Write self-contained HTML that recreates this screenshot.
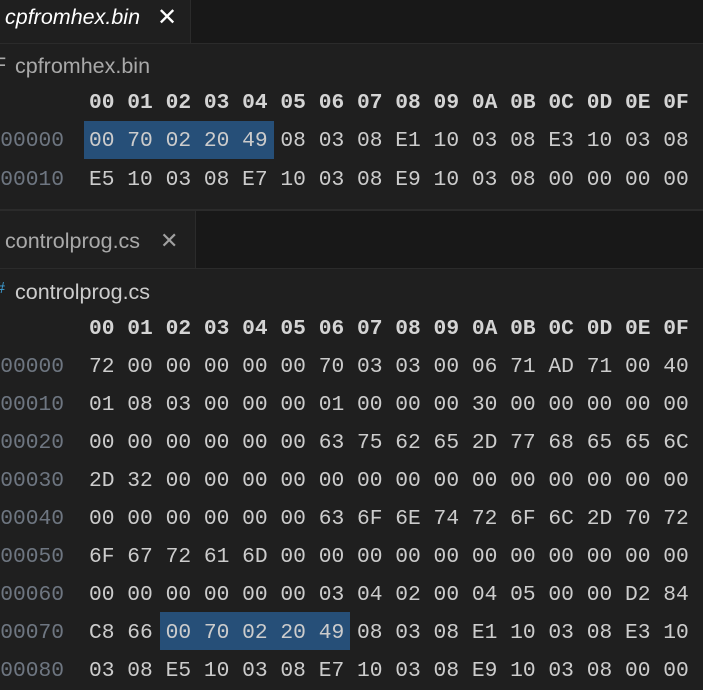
<!DOCTYPE html>
<html><head><meta charset="utf-8"><style>
*{margin:0;padding:0;box-sizing:border-box}
body{width:703px;height:690px;background:#1f1f1f;position:relative;overflow:hidden;font-family:"Liberation Sans",sans-serif}
.bar{position:absolute;left:0;width:703px;background:#181818;border-bottom:1px solid #2b2b2b}
.tab{position:absolute;left:0;background:#1f1f1f;border-right:1px solid #2b2b2b}
.t{position:absolute;font-size:21.5px;white-space:nowrap}
.m{position:absolute;font-family:"Liberation Mono",monospace;font-size:21.27px;white-space:pre;color:#cccccc;line-height:24px}
.h{font-weight:bold;color:#d4d4d4}
.o{color:#6e7681;text-align:right;width:64px;left:0;overflow:hidden;direction:rtl}
.sel{position:absolute;background:#264f78}
</style></head><body>
<div class="bar" style="top:0;height:44px"></div>
<div class="tab" style="top:0;height:43px;width:191px"></div>
<div class="t" style="left:5px;top:5px;color:#fff;font-style:italic">cpfromhex.bin</div>
<div class="t" style="left:157px;top:3px;color:#fff;font-size:24px">✕</div>
<div class="t" style="left:-7px;top:53px;color:#a9a9a9">F</div>
<div class="t" style="left:15px;top:54px;color:#a9a9a9">cpfromhex.bin</div>
<div class="sel" style="left:84px;top:121px;width:190px;height:38px"></div>
<div class="m h" style="left:89px;top:91px">00 01 02 03 04 05 06 07 08 09 0A 0B 0C 0D 0E 0F</div>
<div class="m o" style="top:129px">00000000</div>
<div class="m" style="left:89px;top:129px">00 70 02 20 49 08 03 08 E1 10 03 08 E3 10 03 08</div>
<div class="m o" style="top:168px">00000010</div>
<div class="m" style="left:89px;top:168px">E5 10 03 08 E7 10 03 08 E9 10 03 08 00 00 00 00</div>

<div style="position:absolute;left:0;top:209px;width:703px;height:2px;background:#2b2b2b"></div>
<div class="bar" style="top:211px;height:58px"></div>
<div class="tab" style="top:211px;height:57px;width:196px"></div>
<div class="t" style="left:5px;top:229px;color:#a9a9a9">controlprog.cs</div>
<div class="t" style="left:160px;top:228px;color:#a0a0a0;font-size:22px">✕</div>
<div class="t" style="left:-4px;top:280px;color:#3e9fd6;font-size:16px">#</div>
<div class="t" style="left:15px;top:280px;color:#cccccc">controlprog.cs</div>
<div class="sel" style="left:160px;top:612px;width:190px;height:38px"></div>
<div class="m h" style="left:89px;top:317px">00 01 02 03 04 05 06 07 08 09 0A 0B 0C 0D 0E 0F</div>
<div class="m o" style="top:355px">00000000</div><div class="m" style="left:89px;top:355px">72 00 00 00 00 00 70 03 03 00 06 71 AD 71 00 40</div>
<div class="m o" style="top:393px">00000010</div><div class="m" style="left:89px;top:393px">01 08 03 00 00 00 01 00 00 00 30 00 00 00 00 00</div>
<div class="m o" style="top:431px">00000020</div><div class="m" style="left:89px;top:431px">00 00 00 00 00 00 63 75 62 65 2D 77 68 65 65 6C</div>
<div class="m o" style="top:469px">00000030</div><div class="m" style="left:89px;top:469px">2D 32 00 00 00 00 00 00 00 00 00 00 00 00 00 00</div>
<div class="m o" style="top:507px">00000040</div><div class="m" style="left:89px;top:507px">00 00 00 00 00 00 63 6F 6E 74 72 6F 6C 2D 70 72</div>
<div class="m o" style="top:545px">00000050</div><div class="m" style="left:89px;top:545px">6F 67 72 61 6D 00 00 00 00 00 00 00 00 00 00 00</div>
<div class="m o" style="top:583px">00000060</div><div class="m" style="left:89px;top:583px">00 00 00 00 00 00 03 04 02 00 04 05 00 00 D2 84</div>
<div class="m o" style="top:621px">00000070</div><div class="m" style="left:89px;top:621px">C8 66 00 70 02 20 49 08 03 08 E1 10 03 08 E3 10</div>
<div class="m o" style="top:659px">00000080</div><div class="m" style="left:89px;top:659px">03 08 E5 10 03 08 E7 10 03 08 E9 10 03 08 00 00</div>
</body></html>
